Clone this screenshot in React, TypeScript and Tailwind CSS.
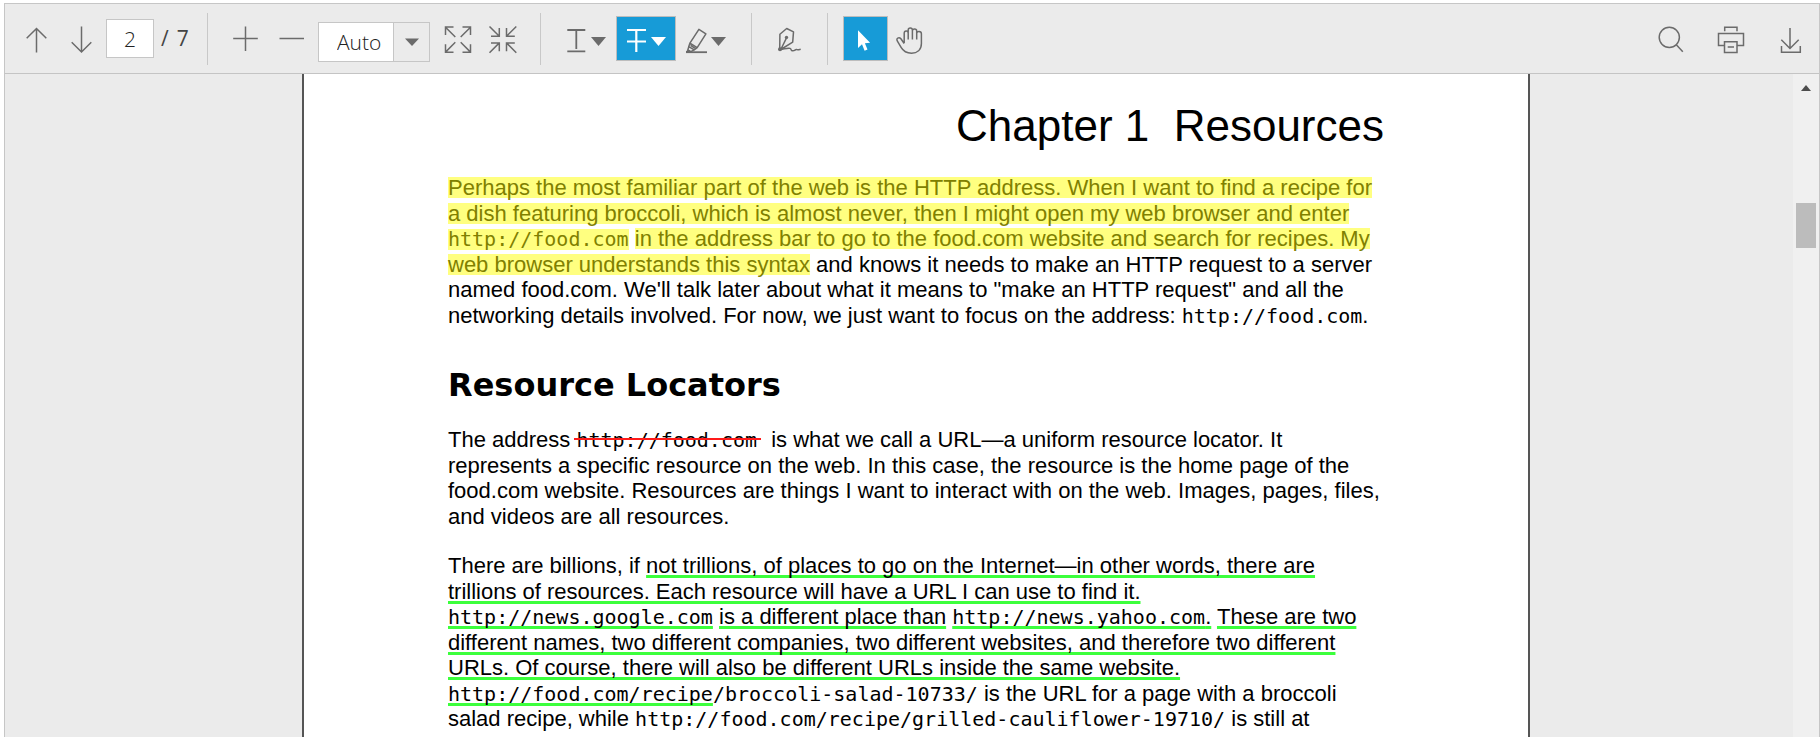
import type { ReactNode } from "react";

type IconProps = { children: ReactNode; wide?: boolean };

function Icon({ children, wide }: IconProps) {
  return (
    <svg
      aria-hidden="true"
      viewBox={wide ? "0 0 60 45" : "0 0 45 45"}
      width={wide ? 60 : 45}
      height={45}
      fill="none"
      stroke="currentColor"
      strokeWidth="1.5"
      className="block shrink-0"
    >
      {children}
    </svg>
  );
}

function Caret() {
  return <path d="M35 21h15l-7.5 9z" fill="currentColor" stroke="none" />;
}

type ToolProps = { label: string; active?: boolean; wide?: boolean; children: ReactNode };

function Tool({ label, active, wide, children }: ToolProps) {
  return (
    <button
      type="button"
      aria-label={label}
      aria-pressed={active}
      className={
        active
          ? "shrink-0 bg-[#179bd7] text-white outline-1 -outline-offset-1 outline-[#bdbdbd]"
          : "shrink-0 text-[#6b6b6b]"
      }
    >
      <Icon wide={wide}>{children}</Icon>
    </button>
  );
}

function Separator() {
  return <div className="mx-[15px] h-[52px] w-px shrink-0 bg-[#c8c8c8]" />;
}

function Toolbar() {
  return (
    <header className="flex h-[70px] shrink-0 items-center border-b border-[#c4c4c4] pr-[6px] pl-[9px] font-['Open_Sans','Noto_Sans',sans-serif] text-[21px] font-light text-[#222]">
      <Tool label="Previous page">
        <path d="M22.5 12.5v24M12.7 22.3l9.8-9.8 9.8 9.8" />
      </Tool>
      <Tool label="Next page">
        <path d="M22.5 10.5v25.5M12.7 26.2l9.8 9.8 9.8-9.8" />
      </Tool>
      <input
        aria-label="Page number"
        defaultValue="2"
        className="ml-[2px] h-[39px] w-[48px] shrink-0 border border-[#c6c6c6] bg-white text-center outline-none"
      />
      <span className="ml-[7px] flex w-[31px] shrink-0 gap-[8px] font-normal whitespace-nowrap text-[#444]">
        <span>/</span>
        <span>7</span>
      </span>
      <Separator />
      <Tool label="Zoom in">
        <path d="M22.5 10.5v24.5M10.2 22.5h24.6" />
      </Tool>
      <Tool label="Zoom out">
        <path d="M11.5 22.5h24.5" />
      </Tool>
      <div className="relative mt-[7px] ml-[5px] h-[40px] w-[112px] shrink-0 border border-[#c6c6c6] bg-white">
        <select
          aria-label="Zoom level"
          defaultValue="Auto"
          className="h-full w-full appearance-none bg-transparent pt-[2px] pl-[18px] outline-none"
        >
          <option>Auto</option>
          <option>100%</option>
        </select>
        <div className="pointer-events-none absolute inset-y-0 right-0 flex w-[36px] items-center justify-center border-l border-[#c6c6c6] bg-[#ebebeb] text-[#6b6b6b]">
          <svg aria-hidden="true" width="14" height="8" viewBox="0 0 14 8">
            <path d="M0 .5h14L7 8z" fill="currentColor" />
          </svg>
        </div>
      </div>
      <div className="ml-[5px] flex shrink-0">
        <Tool label="Fit to page">
          <path d="M20.3 21 10.5 11.2M10.5 19v-8h8M25.7 21l9.8-9.8M27.5 11h8v8M20.3 26.3l-9.8 9.8M10.5 28.3v8h8M25.7 26.3l9.8 9.8M27.5 36.3h8v-8" />
        </Tool>
        <Tool label="Fit to width">
          <path d="M9.5 10.5l9.8 9.8M19.3 12v8.3h-8.3M36.3 10.5l-9.8 9.8M26.5 12v8.3h8.3M9.5 36.7l9.8-9.8M11 26.9h8.3v8.3M36.3 36.7l-9.8-9.8M26.5 35.2v-8.3h8.3" />
        </Tool>
      </div>
      <Separator />
      <Tool label="Underline" wide>
        <path d="M11.3 14h18M20.3 14v19M11.3 35.3h18" strokeWidth="1.8" />
        <Caret />
      </Tool>
      <Tool label="Strikethrough" active wide>
        <path d="M11 14h19M20.3 14v22M11 25.5h19" strokeWidth="2.2" />
        <Caret />
      </Tool>
      <Tool label="Highlight" wide>
        <path
          d="M22.9 13.4l7 4.4-8.7 13.8-7.3-4.4zM13.9 27.2l-1.1 3.4 5.4 3.3 3-2.3M12.8 30.6l-.9 3.2 2.9 1.8 3.4-1.7M14.6 29.4l4.6 2.9"
          strokeLinejoin="round"
        />
        <path d="M11.9 33.8l-1.8 2.2h4.2z" fill="currentColor" strokeWidth="1" />
        <path d="M10 36.2h21" strokeWidth="1.8" />
        <Caret />
      </Tool>
      <Separator />
      <Tool label="Signature">
        <path
          d="M12.7 33.5l.2-15.2 6.8-5.8 6.8 3.4-.8 10.2-11.9 7.4 5.6-11.4"
          strokeLinejoin="round"
        />
        <circle cx="19.5" cy="21.4" r="1.7" fill="currentColor" stroke="none" />
        <circle cx="13" cy="33.2" r="2" fill="currentColor" stroke="none" />
        <path d="M13.5 33.6c4-.6 7.5-2 9.5-1.2 2 .9.3 2.5 2.8 2.4 2.5-.2 2-1.5 4-1.2 1.5.4 2.2 0 3.900-.4" />
      </Tool>
      <Separator />
      <Tool label="Selection" active>
        <path
          d="M15 14.3v17.6l4-3.6 2.6 6.500 2.900-1.200-2.600-6.400 5.200-.4z"
          fill="currentColor"
          stroke="none"
        />
      </Tool>
      <Tool label="Pan">
        <path
          d="M16.2 27v-9.8c0-2.900 4-2.900 4 0v6.300M20.200 22v-7.800c0-2.800 4.200-2.800 4.200 0v9.300M24.400 22v-7c0-2.800 4.300-2.800 4.300 0v8.500M28.700 22.500v-5c0-2.900 4.700-2.500 4.700.3v9.700c0 6.500-4.400 9.700-9.900 9.700-5.600 0-8.500-2.500-10.400-5.800l-3.700-6.300c-1.800-3 1.700-4.200 3.500-2.300l3.300 4.700"
          strokeLinejoin="round"
        />
      </Tool>
      <div className="ml-auto flex gap-[15px] pl-4">
        <Tool label="Search">
          <circle cx="21.3" cy="21.3" r="10.1" />
          <path d="M28.3 28.8l6.5 7" />
        </Tool>
        <Tool label="Print">
          <path d="M16.7 15.3v-4h12.3v4M16.5 29.5h-6v-12h25v12h-6.5M16.5 25.7h12.5v10.7h-12.5zM19.7 31h6.3" />
        </Tool>
        <Tool label="Download">
          <path d="M22 12v20.5M13.3 23.8l8.7 8.7 8.7-8.7M13.5 30v6.3h18.8v-6.3" />
        </Tool>
      </div>
    </header>
  );
}

function Url({ children }: { children: ReactNode }) {
  return <span className="font-['DejaVu_Sans_Mono',monospace] text-xl leading-none">{children}</span>;
}

function Line({ children }: { children: ReactNode }) {
  return <span className="block whitespace-nowrap odd:leading-[26px] even:leading-[25px]">{children}</span>;
}

function Mark({ children }: { children: ReactNode }) {
  return (
    <mark className="bg-transparent bg-[linear-gradient(#ffff80,#ffff80)] bg-[length:100%_21px] bg-[position:0_2px] bg-no-repeat text-[#808000]">
      {children}
    </mark>
  );
}

function Under({ children }: { children: ReactNode }) {
  return (
    <u className="underline decoration-[#3cff3c] decoration-[3px] underline-offset-2 [text-decoration-skip-ink:none]">
      {children}
    </u>
  );
}

function Document() {
  return (
    <article className="min-w-0 flex-1 overflow-hidden border-x-2 border-[#555] bg-white px-[144px] font-['Liberation_Sans',Arial,sans-serif] text-[22px] text-black">
      <h1 className="pt-[27px] text-right text-[44px] leading-[50px] whitespace-pre">Chapter 1  Resources</h1>
      <p className="mt-[24px]">
        <Line>
          <Mark>Perhaps the most familiar part of the web is the HTTP address. When I want to find a recipe for</Mark>
        </Line>
        <Line>
          <Mark>a dish featuring broccoli, which is almost never, then I might open my web browser and enter</Mark>
        </Line>
        <Line>
          <Url>
            <Mark>http://food.com</Mark>
          </Url>{" "}
          <Mark>in the address bar to go to the food.com website and search for recipes. My</Mark>
        </Line>
        <Line>
          <Mark>web browser understands this syntax</Mark> and knows it needs to make an HTTP request to a server
        </Line>
        <Line>named food.com. We'll talk later about what it means to "make an HTTP request" and all the</Line>
        <Line>
          networking details involved. For now, we just want to focus on the address: <Url>http://food.com</Url>.
        </Line>
      </p>
      <h2 className="mt-[37px] font-['DejaVu_Sans',Verdana,sans-serif] text-[32px] leading-[40px] font-bold">
        Resource Locators
      </h2>
      <p className="mt-[22px]">
        <Line>
          The address{" "}
          <del className="relative pr-[8px] no-underline">
            <Url>http://food.com</Url>
            <span className="absolute top-[11px] right-[4px] -left-[2px] h-[2px] bg-[#ff1a1a]" />
          </del>{" "}
          is what we call a URL—a uniform resource locator. It
        </Line>
        <Line>represents a specific resource on the web. In this case, the resource is the home page of the</Line>
        <Line>food.com website. Resources are things I want to interact with on the web. Images, pages, files,</Line>
        <Line>and videos are all resources.</Line>
      </p>
      <p className="mt-[24px]">
        <Line>
          There are billions, if <Under>not trillions, of places to go on the Internet—in other words, there are</Under>
        </Line>
        <Line>
          <Under>trillions of resources. Each resource will have a URL I can use to find it.</Under>
        </Line>
        <Line>
          <Url>
            <Under>http://news.google.com</Under>
          </Url>{" "}
          <Under>is a different place than</Under>{" "}
          <Url>
            <Under>http://news.yahoo.com</Under>
          </Url>
          <Under>.</Under> <Under>These are two</Under>
        </Line>
        <Line>
          <Under>different names, two different companies, two different websites, and therefore two different</Under>
        </Line>
        <Line>
          <Under>URLs. Of course, there will also be different URLs inside the same website.</Under>
        </Line>
        <Line>
          <Url>
            <Under>http://food.com/recipe</Under>/broccoli-salad-10733/
          </Url>{" "}
          is the URL for a page with a broccoli
        </Line>
        <Line>
          salad recipe, while <Url>http://food.com/recipe/grilled-cauliflower-19710/</Url> is still at
        </Line>
      </p>
    </article>
  );
}

function Scrollbar() {
  return (
    <div className="flex w-[26px] shrink-0 flex-col items-center bg-[#f0f0f0] pt-[11px]">
      <svg aria-hidden="true" width="10" height="6" viewBox="0 0 10 6">
        <path d="M5 0l5 6H0z" fill="#4d4d4d" />
      </svg>
      <div className="mt-[112px] h-[45px] w-[20px] bg-[#bcbcbc]" />
    </div>
  );
}

export default function App() {
  return (
    <div className="h-screen overflow-hidden bg-white pt-[3px] pl-[4px]">
      <div className="flex h-full flex-col border border-b-0 border-[#c6c6c6] bg-[#ebebeb]">
        <Toolbar />
        <main className="flex min-h-0 flex-1">
          <div className="flex min-w-0 flex-1 pr-[263px] pl-[297px]">
            <Document />
          </div>
          <Scrollbar />
        </main>
      </div>
    </div>
  );
}
